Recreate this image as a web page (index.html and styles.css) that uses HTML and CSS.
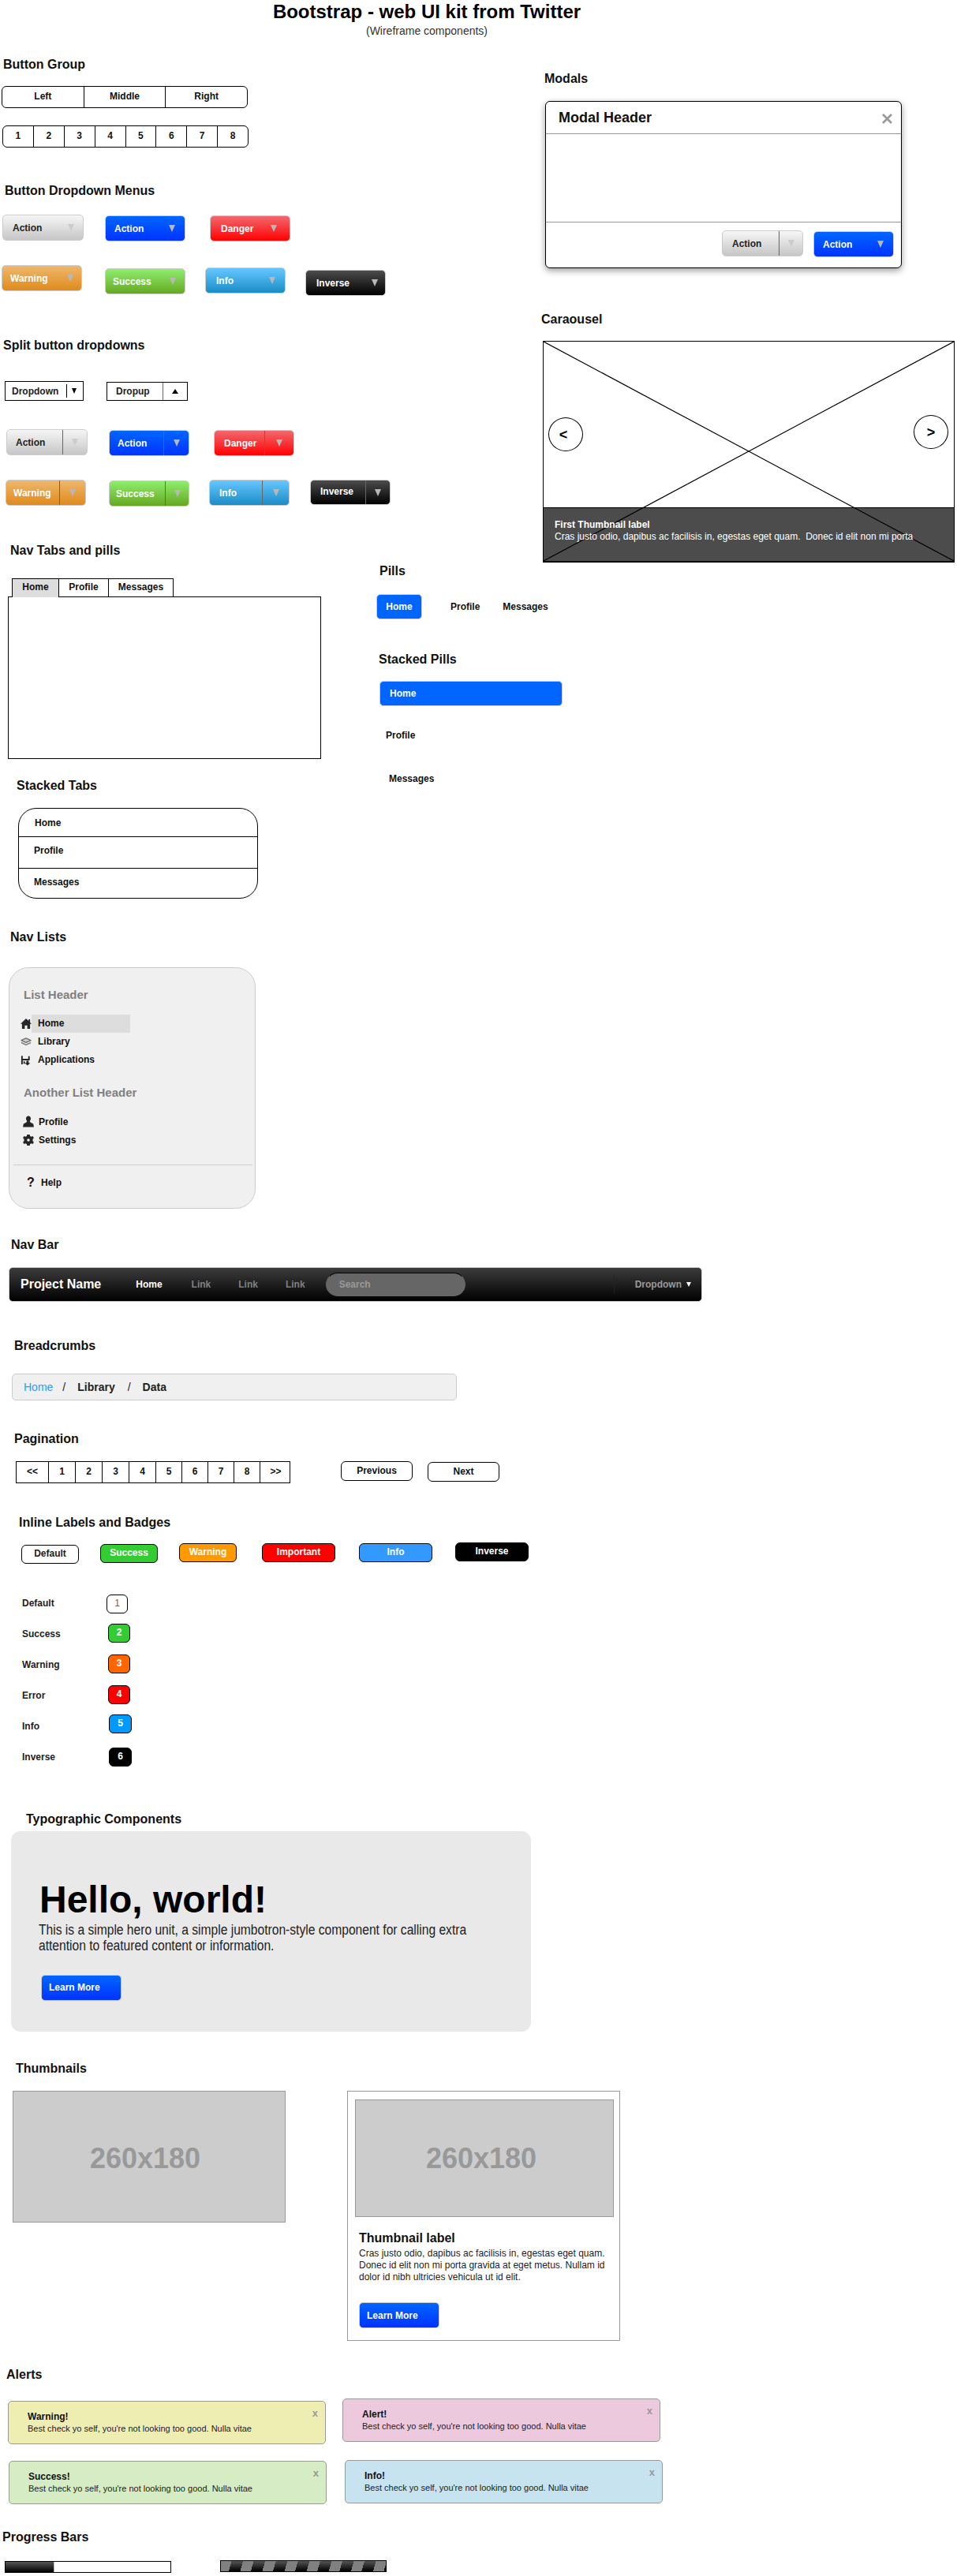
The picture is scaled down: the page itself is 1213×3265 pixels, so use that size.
FILE: index.html
```html
<!DOCTYPE html>
<html lang="en">
<head>
<meta charset="utf-8">
<title>Bootstrap - web UI kit from Twitter</title>
<link rel="stylesheet" href="styles.css">
</head>
<body>
<header class="head">
  <h1 class="head-title">Bootstrap - web UI kit from Twitter</h1>
  <p class="head-sub">(Wireframe components)</p>
</header>

<div class="top">
  <div class="left">
    <h2 class="st st-group">Button Group</h2>
    <div class="bgroup bgroup-a"><span>Left</span><span>Middle</span><span>Right</span></div>
    <div class="bgroup bgroup-b"><span>1</span><span>2</span><span>3</span><span>4</span><span>5</span><span>6</span><span>7</span><span>8</span></div>

    <h2 class="st st-dd">Button Dropdown Menus</h2>
    <div class="row row-dd1">
      <div class="btn gray dd1-gray"><span>Action</span><i class="caret"></i></div>
      <div class="btn blue dd1-blue"><span>Action</span><i class="caret"></i></div>
      <div class="btn red dd1-red"><span>Danger</span><i class="caret"></i></div>
    </div>
    <div class="row row-dd2">
      <div class="btn orange dd2-orange"><span>Warning</span><i class="caret"></i></div>
      <div class="btn green dd2-green"><span>Success</span><i class="caret"></i></div>
      <div class="btn sky dd2-sky"><span>Info</span><i class="caret"></i></div>
      <div class="btn dark dd2-dark"><span>Inverse</span><i class="caret"></i></div>
    </div>

    <h2 class="st st-split">Split button dropdowns</h2>
    <div class="row row-wire">
      <div class="wire wire-down"><span>Dropdown</span><b class="wire-sep"></b><i class="caret caret-black"></i></div>
      <div class="wire wire-up"><span class="wire-main">Dropup</span><i class="caret-up"></i></div>
    </div>
    <div class="row row-sp1">
      <div class="btn split gray sp1-gray"><span class="main">Action</span><span class="side"><i class="caret"></i></span></div>
      <div class="btn split blue sp1-blue"><span class="main">Action</span><span class="side"><i class="caret"></i></span></div>
      <div class="btn split red sp1-red"><span class="main">Danger</span><span class="side"><i class="caret"></i></span></div>
    </div>
    <div class="row row-sp2">
      <div class="btn split orange sp2-orange"><span class="main">Warning</span><span class="side"><i class="caret"></i></span></div>
      <div class="btn split green sp2-green"><span class="main">Success</span><span class="side"><i class="caret"></i></span></div>
      <div class="btn split sky sp2-sky"><span class="main">Info</span><span class="side"><i class="caret"></i></span></div>
      <div class="btn split dark sp2-dark"><span class="main">Inverse</span><span class="side"><i class="caret"></i></span></div>
    </div>

    <div class="nav-row">
      <div class="nav-main">
        <h2 class="st st-tabs">Nav Tabs and pills</h2>
        <div class="tabs"><span class="tab tab-home">Home</span><span class="tab tab-profile">Profile</span><span class="tab tab-msg">Messages</span></div>
        <div class="tab-body"></div>

        <h2 class="st st-stacked">Stacked Tabs</h2>
        <div class="stacked">
          <div class="stacked-a">Home</div>
          <div class="stacked-b">Profile</div>
          <div class="stacked-c">Messages</div>
        </div>
      </div>
      <div class="pills-col">
        <h2 class="st st-pills">Pills</h2>
        <div class="pills"><span class="pill">Home</span><span class="pill-link pl-profile">Profile</span><span class="pill-link pl-msg">Messages</span></div>
        <h2 class="st st-spills">Stacked Pills</h2>
        <div class="spill">Home</div>
        <div class="spill-link spl-profile">Profile</div>
        <div class="spill-link spl-msg">Messages</div>
      </div>
    </div>
  </div>

  <aside class="right">
    <h2 class="st st-modals">Modals</h2>
    <div class="modal">
      <div class="modal-head"><span>Modal Header</span>
        <svg class="modal-x" width="13" height="13" viewBox="0 0 13 13"><path d="M1 1 12 12M12 1 1 12" stroke="#999" stroke-width="2.6" fill="none"/></svg>
      </div>
      <div class="modal-body"></div>
      <div class="modal-foot">
        <div class="btn split gray md-gray"><span class="main">Action</span><span class="side"><i class="caret"></i></span></div>
        <div class="btn blue md-blue"><span>Action</span><i class="caret"></i></div>
      </div>
    </div>
    <h2 class="st st-car">Caraousel</h2>
    <div class="carousel">
      <svg class="car-x" viewBox="0 0 520 279" preserveAspectRatio="none"><path d="M0 0 520 279M0 279 520 0" stroke="#000" stroke-width="1.2" fill="none"/></svg>
      <div class="car-prev">&lt;</div>
      <div class="car-next">&gt;</div>
      <div class="car-cap">
        <div class="car-cap-title">First Thumbnail label</div>
        <div class="car-cap-text">Cras justo odio, dapibus ac facilisis in, egestas eget quam.&nbsp; Donec id elit non mi porta</div>
      </div>
    </div>
  </aside>
</div>

<h2 class="st st-lists">Nav Lists</h2>
<nav class="panel">
  <div class="panel-h panel-h1">List Header</div>
  <ul class="nlist nlist-a">
    <li class="active">
      <svg class="ico" width="15" height="15" viewBox="0 0 15 15"><path d="M7.500 .5 11 3.800V1.500h2v4.200L15 7.800H13V14.500H9.200V9.800H5.800V14.500H2V7.800H0z" fill="#262626"/></svg>
      <span class="nl">Home</span></li>
    <li>
      <svg class="ico" width="15" height="14" viewBox="0 0 15 14"><path d="M7.500 1.500 14 4.500 7.500 7.500 1 4.500z" fill="#ccc" stroke="#707070" stroke-width="1.400" stroke-linejoin="round"/><path d="M.8 6.500 1 8.500 7.500 11.500 14 8.500 14.200 6.500 7.500 9.500z" fill="#8a8a8a"/></svg>
      <span class="nl">Library</span></li>
    <li>
      <svg class="ico" width="15" height="15" viewBox="0 0 15 15"><path d="M1 2h2v4h7.500V2.500H12.500V8H3v5.500H1z" fill="#222"/><path d="M4 9.500h2v3H4zM8 8.500h3v3h2.200L9.500 15 5.800 11.500H8z" fill="#222"/></svg>
      <span class="nl">Applications</span></li>
  </ul>
  <div class="panel-h panel-h2">Another List Header</div>
  <ul class="nlist nlist-b">
    <li>
      <svg class="ico" width="14" height="15" viewBox="0 0 14 15"><path d="M7 .5c2 0 3 1.500 3 3.300 0 1.400-.6 2.500-1.200 3.200l.7 1.500 3.700 2 .8 4H.0l.8-4 3.700-2 .7-1.500C4.600 6.300 4 5.200 4 3.800 4 2 5 .5 7 .5z" fill="#262626"/></svg>
      <span class="nl">Profile</span></li>
    <li>
      <svg class="ico" width="14" height="14" viewBox="0 0 14 14"><path fill-rule="evenodd" d="M5.300 0h3.400l.4 1.900 1.700.9 1.800-.8 1.300 2.400-1.400 1.300v2.600l1.400 1.300-1.300 2.400-1.800-.8-1.700.9-.4 1.900H5.300l-.4-1.900-1.700-.9-1.800.8L.1 9.600l1.400-1.300V5.700L.1 4.400 1.400 2l1.800.8 1.700-.9zM7 5.200a1.800 1.800 0 1 0 0 3.600 1.800 1.800 0 0 0 0-3.600z" fill="#262626"/></svg>
      <span class="nl">Settings</span></li>
  </ul>
  <hr class="panel-rule">
  <div class="help"><span class="help-q">?</span><span>Help</span></div>
</nav>

<h2 class="st st-navbar">Nav Bar</h2>
<div class="navbar">
  <span class="brand">Project Name</span>
  <span class="nb-home">Home</span>
  <span class="nb-link nb-l1">Link</span>
  <span class="nb-link nb-l2">Link</span>
  <span class="nb-link nb-l2">Link</span>
  <div class="nb-search">Search</div>
  <div class="nb-right"><span class="nb-drop">Dropdown</span><i class="caret-mini"></i></div>
</div>

<h2 class="st st-crumbs">Breadcrumbs</h2>
<div class="crumbs">
  <a class="cr-home">Home</a><span class="cr-sep cr-sep1">/</span><span class="cr-lib">Library</span><span class="cr-sep cr-sep2">/</span><span class="cr-data">Data</span>
</div>

<h2 class="st st-pag">Pagination</h2>
<div class="row row-pag">
  <div class="pager"><span>&lt;&lt;</span><span>1</span><span>2</span><span>3</span><span>4</span><span>5</span><span>6</span><span>7</span><span>8</span><span>&gt;&gt;</span></div>
  <span class="pg-btn pg-prev">Previous</span>
  <span class="pg-btn pg-next">Next</span>
</div>

<h2 class="st st-labels">Inline Labels and Badges</h2>
<div class="row row-labels">
  <span class="lab lab-default">Default</span>
  <span class="lab lab-success">Success</span>
  <span class="lab lab-warning">Warning</span>
  <span class="lab lab-important">Important</span>
  <span class="lab lab-info">Info</span>
  <span class="lab lab-inverse">Inverse</span>
</div>
<div class="badges">
  <div class="bd-row"><span class="bd-name">Default</span><span class="bd bd1">1</span></div>
  <div class="bd-row"><span class="bd-name">Success</span><span class="bd bd2">2</span></div>
  <div class="bd-row"><span class="bd-name">Warning</span><span class="bd bd3">3</span></div>
  <div class="bd-row"><span class="bd-name">Error</span><span class="bd bd4">4</span></div>
  <div class="bd-row"><span class="bd-name">Info</span><span class="bd bd5">5</span></div>
  <div class="bd-row"><span class="bd-name">Inverse</span><span class="bd bd6">6</span></div>
</div>

<h2 class="st st-typo">Typographic Components</h2>
<section class="hero">
  <h1 class="hero-title">Hello, world!</h1>
  <p class="hero-text">This is a simple hero unit, a simple jumbotron-style component for calling extra attention to featured content or information.</p>
  <div class="btn blue learn learn-hero">Learn More</div>
</section>

<h2 class="st st-thumbs">Thumbnails</h2>
<div class="row row-thumbs">
  <div class="ph ph-a">260x180</div>
  <div class="thumb">
    <div class="ph ph-b">260x180</div>
    <h3 class="thumb-label">Thumbnail label</h3>
    <p class="thumb-text">Cras justo odio, dapibus ac facilisis in, egestas eget quam. Donec id elit non mi porta gravida at eget metus. Nullam id dolor id nibh ultricies vehicula ut id elit.</p>
    <div class="btn blue learn learn-thumb">Learn More</div>
  </div>
</div>

<h2 class="st st-alerts">Alerts</h2>
<div class="row row-al1">
  <div class="alert al-warn"><div><div class="al-h">Warning!</div><div class="al-t">Best check yo self, you're not looking too good. Nulla vitae</div></div><span class="al-x">x</span></div>
  <div class="alert al-pink"><div><div class="al-h">Alert!</div><div class="al-t">Best check yo self, you're not looking too good. Nulla vitae</div></div><span class="al-x">x</span></div>
</div>
<div class="row row-al2">
  <div class="alert al-ok"><div><div class="al-h">Success!</div><div class="al-t">Best check yo self, you're not looking too good. Nulla vitae</div></div><span class="al-x">x</span></div>
  <div class="alert al-info"><div><div class="al-h">Info!</div><div class="al-t">Best check yo self, you're not looking too good. Nulla vitae</div></div><span class="al-x">x</span></div>
</div>

<h2 class="st st-progress">Progress Bars</h2>
<div class="row row-prog">
  <div class="bar bar-a"><div class="bar-fill"></div></div>
  <div class="bar bar-b"></div>
</div>
</body>
</html>
```
FILE: styles.css
```css
* { box-sizing: border-box; }
html, body { margin: 0; padding: 0; }
body { width: 1213px; height: 3265px; overflow: hidden; background: #fff; color: #111; font: bold 12px/16px "Liberation Sans", Arial, sans-serif; }
h1, h2, h3, p, ul { margin: 0; padding: 0; }
ul { list-style: none; }
.row { display: flex; align-items: flex-start; }

/* header */
.head { width: 1082px; padding-top: 1px; text-align: center; }
.head-title { font: bold 24px/28px "Liberation Sans", sans-serif; color: #000; }
.head-sub { margin-top: 2px; font: 14px/16px "Liberation Sans", sans-serif; color: #333; }

.top { display: flex; align-items: flex-start; }
.left { flex: 0 0 685px; width: 685px; }
.right { flex: 0 0 528px; }

/* section titles */
.st { font: bold 16px/20px "Liberation Sans", sans-serif; color: #111; height: 20px; }
.st-group { margin: 25px 0 0 4px; }
.st-dd { margin: 45px 0 0 6px; }
.st-split { margin: 53px 0 0 4px; }
.st-tabs { margin: 46px 0 0 13px; }
.st-stacked { margin: 24px 0 0 21px; }
.st-pills { margin: 72px 0 0 4px; }
.st-spills { margin: 41px 0 0 3px; }
.st-modals { margin: 43px 0 0 5px; }
.st-car { margin: 55px 0 0 1px; }
.st-lists { margin: 39px 0 0 13px; }
.st-navbar { margin: 36px 0 0 14px; }
.st-crumbs { margin: 46px 0 0 18px; }
.st-pag { margin: 39px 0 0 18px; }
.st-labels { margin: 40px 0 0 24px; }
.st-typo { margin: 49px 0 0 33px; }
.st-thumbs { margin: 37px 0 0 20px; }
.st-alerts { margin: 33px 0 0 8px; }
.st-progress { margin: 32px 0 0 3px; }

/* button groups */
.bgroup { display: flex; width: 312px; height: 28px; border: 1px solid #000; border-radius: 6px; }
.bgroup span { flex: 1; display: flex; align-items: center; justify-content: center; padding-bottom: 3px; }
.bgroup span + span { border-left: 1px solid #000; }
.bgroup-a { margin: 17px 0 0 2px; }
.bgroup-b { margin: 22px 0 0 3px; }

/* gradient buttons */
.btn { display: flex; align-items: center; justify-content: space-between; width: 102px; height: 33px; border: 1px solid #ccc; border-radius: 5px; flex: none; }
.gray { background: linear-gradient(#f6f6f6, #c6c6c6); color: #222; }
.blue { background: linear-gradient(#0066ff, #0033ff); color: #fff; }
.red { background: linear-gradient(#f2696f, #ff0000); color: #fff; }
.orange { background: linear-gradient(#eeb86c, #e08a1c); color: #fff; }
.green { background: linear-gradient(#8eee6e, #66a820); color: #fff; }
.sky { background: linear-gradient(#66c7ff, #1a8cc6); color: #fff; }
.dark { background: linear-gradient(#4c4c4c, #000); color: #fff; }
.gray .caret { border-top-color: #ccc; }
.caret { display: block; width: 0; height: 0; border-left: 4px solid transparent; border-right: 4px solid transparent; border-top: 9px solid #b8b8b8; flex: none; }

.row-dd1 { margin-top: 20px; }
.row-dd2 { margin-top: 30px; }
.dd1-gray { width: 103px; margin-left: 3px; padding: 0 11px 0 12px; }
.dd1-blue { margin: 1px 0 0 27px; padding: 0 12px 0 11px; }
.dd1-red { margin: 1px 0 0 31px; padding: 0 16px 0 13px; }
.dd2-orange { margin-left: 2px; padding: 0 10px 0 10px; }
.dd2-green { margin: 4px 0 0 29px; padding: 0 11px 0 9px; }
.dd2-sky { margin: 3px 0 0 25px; padding: 0 12px 0 13px; }
.dd2-dark { margin: 6px 0 0 25px; padding: 0 9px 0 13px; }

/* wireframe split */
.row-wire { margin-top: 35px; }
.wire { display: flex; align-items: center; border: 1px solid #000; flex: none; font-size: 12px; color: #222; }
.wire-down { width: 100px; height: 25px; margin-left: 6px; padding-left: 8px; }
.wire-sep { width: 1px; height: 17px; margin-left: 10px; background: #000; }
.caret-black { margin-left: 6px; border-left-width: 3.5px; border-right-width: 3.5px; border-top: 7px solid #000; }
.wire-up { width: 103px; height: 24px; margin: 1px 0 0 29px; }
.wire-main { width: 71px; height: 100%; padding-left: 11px; line-height: 22px; border-right: 1px solid #666; }
.caret-up { display: block; width: 0; height: 0; margin-left: 11px; border-left: 4px solid transparent; border-right: 4px solid transparent; border-bottom: 6px solid #000; }

.split { justify-content: flex-start; }
.split .main { display: flex; align-items: center; height: 100%; border-right: 1px solid #666; flex: none; }
.split .side { flex: 1; display: flex; justify-content: center; align-items: center; }
.row-sp1 { margin-top: 36px; }
.row-sp2 { margin-top: 30px; }
.sp1-gray { width: 103px; margin-left: 8px; }
.sp1-gray .main { width: 71px; padding-left: 11px; }
.sp1-blue { margin: 1px 0 0 27px; }
.sp1-blue .main { width: 69px; padding-left: 10px; }
.sp1-red { margin: 1px 0 0 31px; }
.sp1-red .main { width: 64px; padding-left: 12px; }
.sp2-orange { margin-left: 7px; }
.sp2-orange .main { width: 68px; padding-left: 9px; }
.sp2-green { margin: 1px 0 0 29px; }
.sp2-green .main { width: 71px; padding-left: 8px; }
.sp2-sky { margin-left: 25px; }
.sp2-sky .main { width: 67px; padding-left: 12px; }
.sp2-dark { margin-left: 26px; height: 32px; }
.sp2-dark .main { width: 70px; padding: 0 0 3px 12px; }

/* nav row */
.nav-row { display: flex; align-items: flex-start; }
.nav-main { flex: 0 0 477px; }
.pills-col { flex: none; width: 240px; }
.tabs { display: flex; height: 24px; margin: 25px 0 0 15px; }
.tab { display: flex; align-items: center; justify-content: center; border: 1px solid #000; border-bottom: 0; padding-bottom: 3px; }
.tab + .tab { border-left: 0; }
.tab-home { width: 60px; background: #ddd; }
.tab-profile { width: 63px; }
.tab-msg { width: 82px; }
.tab-body { width: 397px; height: 206px; margin: -1px 0 0 10px; border: 1px solid #000; }
.stacked { width: 304px; height: 115px; margin: 18px 0 0 23px; border: 1px solid #000; border-radius: 23px; }
.stacked div { display: flex; align-items: center; }
.stacked-a { height: 35px; padding-left: 20px; }
.stacked-b { height: 40px; padding: 0 0 6px 19px; border-top: 1px solid #000; }
.stacked-c { height: 38px; padding: 0 0 3px 19px; border-top: 1px solid #000; }

.pills { display: flex; align-items: center; height: 32px; margin-top: 19px; }
.pill { display: flex; align-items: center; justify-content: center; width: 58px; height: 32px; background: #0066ff; border: 1px solid #ccc; border-radius: 5px; color: #fff; }
.pl-profile { margin-left: 36px; }
.pl-msg { margin-left: 29px; }
.spill { display: flex; align-items: center; width: 232px; height: 32px; margin: 17px 0 0 4px; padding-left: 12px; background: #0066ff; border: 1px solid #ccc; border-radius: 5px; color: #fff; }
.spl-profile { margin: 29px 0 0 12px; }
.spl-msg { margin: 39px 0 0 16px; }

/* modal */
.modal { width: 452px; height: 212px; margin: 18px 0 0 6px; border: 1px solid #000; border-radius: 6px; box-shadow: 0 3px 8px rgba(0, 0, 0, .4); background: #fff; }
.modal-head { display: flex; align-items: center; justify-content: space-between; height: 41px; padding: 0 11px 0 16px; border-bottom: 1px solid #999; font-size: 18px; }
.modal-x { margin-top: 2px; }
.modal-body { height: 112px; border-bottom: 1px solid #999; }
.modal-foot { display: flex; justify-content: flex-end; align-items: flex-start; gap: 13px; padding: 10px 9px 0 0; }
.md-gray { width: 103px; }
.md-gray .main { width: 72px; padding-left: 12px; }
.md-blue { margin-top: 1px; padding: 0 12px 0 11px; }

/* carousel */
.carousel { position: relative; display: flex; flex-direction: column; justify-content: flex-end; width: 522px; height: 281px; margin: 17px 0 0 3px; border: 1px solid #000; border-bottom-width: 2px; }
.car-x { position: absolute; left: 0; top: 0; width: 100%; height: 100%; z-index: 0; }
.car-cap { position: relative; height: 68px; padding: 14px 0 0 14px; background: rgba(0, 0, 0, .7); border-top: 1px solid #000; color: #fff; }
.car-cap-title { line-height: 15px; }
.car-cap-text { font-weight: 400; line-height: 15px; }
.car-prev, .car-next { position: absolute; z-index: 1; display: flex; align-items: center; justify-content: center; width: 44px; height: 43px; border: 1px solid #000; border-radius: 50%; background: #fff; font: bold 18px/20px "Liberation Sans", sans-serif; color: #000; }
.car-prev { left: 6px; top: 96px; padding-right: 6px; }
.car-next { left: 469px; top: 93px; }

/* nav list */
.panel { width: 313px; height: 306px; margin: 28px 0 0 11px; padding-top: 25px; background: #f0f0f0; border: 1px solid #ccc; border-radius: 25px; }
.panel-h { font: bold 15px/18px "Liberation Sans", sans-serif; color: #808080; padding-left: 18px; }
.panel-h2 { margin-top: 21px; }
.nlist li { display: flex; align-items: center; height: 23px; }
.nlist-a { margin-top: 16px; padding-left: 14px; }
.nlist-b { margin-top: 16px; padding-left: 17px; }
.nlist-a .ico { flex: 0 0 14px; width: 14px; }
.nlist-a .nl { padding-left: 8px; width: 125px; line-height: 23px; }
.nlist-a .active .nl { background: #ddd; }
.nlist-b .nl { padding-left: 6px; }
.ico { flex: none; overflow: visible; }
.panel-rule { margin: 20px 0 0 5px; width: 303px; height: 1px; border: 0; background: #ccc; }
.help { display: flex; align-items: center; height: 23px; margin-top: 10px; padding-left: 22px; }
.help-q { width: 18px; font-size: 16px; color: #111; }

/* navbar */
.navbar { display: flex; align-items: center; width: 879px; height: 44px; margin: 18px 0 0 11px; padding-left: 14px; background: linear-gradient(#3c3c3c, #000); border: 1px solid #ccc; border-radius: 5px; color: #808080; }
.brand { font-size: 16px; color: #fff; }
.nb-home { margin-left: 44px; color: #fff; }
.nb-l1 { margin-left: 37px; }
.nb-l2 { margin-left: 35px; }
.nb-search { width: 177px; height: 30px; margin-left: 26px; padding-left: 16px; line-height: 28px; background: #666; border: 1px solid #666; border-top-color: #000; border-radius: 15px; color: #999; }
.nb-right { display: flex; align-items: center; height: 24px; margin-left: auto; margin-right: 13px; padding-left: 26px; border-left: 1px solid #222; color: #999; }
.caret-mini { display: block; width: 0; height: 0; margin-left: 6px; border-left: 3px solid transparent; border-right: 3px solid transparent; border-top: 6px solid #fff; }

/* breadcrumbs */
.crumbs { display: flex; align-items: center; width: 564px; height: 34px; margin: 25px 0 0 15px; padding-left: 14px; background: #f0f0f0; border: 1px solid #ccc; border-radius: 5px; font-size: 14px; color: #222; }
.cr-home { font-weight: 400; color: #3399ff; }
.cr-sep { font-weight: 400; }
.cr-sep1 { margin-left: 12px; }
.cr-lib { margin-left: 15px; }
.cr-sep2 { margin-left: 16px; }
.cr-data { margin-left: 15px; }

/* pagination */
.row-pag { margin: 18px 0 0 20px; }
.pager { display: grid; grid-template-columns: 40px repeat(4, 34px) repeat(4, 33px) 40px; width: 348px; height: 28px; border: 1px solid #000; }
.pager span { display: flex; align-items: center; justify-content: center; padding-bottom: 3px; }
.pager span + span { border-left: 1px solid #000; }
.pg-btn { display: flex; align-items: center; justify-content: center; width: 91px; height: 25px; border: 1px solid #000; border-radius: 6px; padding-bottom: 2px; }
.pg-prev { margin-left: 64px; }
.pg-next { margin: 1px 0 0 19px; }

/* labels */
.row-labels { margin-top: 15px; }
.lab { display: flex; align-items: center; justify-content: center; width: 93px; height: 24px; border: 1px solid #000; border-radius: 6px; padding-bottom: 2px; color: #fff; }
.lab-default { width: 73px; margin: 3px 0 0 27px; background: #fff; color: #222; }
.lab-success { width: 73px; margin: 2px 0 0 27px; background: #33cc33; }
.lab-warning { width: 73px; margin: 1px 0 0 27px; background: #ff9900; }
.lab-important { margin: 1px 0 0 32px; background: #ff0000; }
.lab-info { margin: 1px 0 0 30px; background: #3399ff; }
.lab-inverse { margin: 0 0 0 29px; background: #000; }

.badges { margin: 31px 0 0 28px; }
.bd-row { display: flex; align-items: flex-start; height: 39px; }
.bd-name { width: 107px; line-height: 39px; color: #222; }
.bd { display: flex; align-items: center; justify-content: center; width: 28px; height: 24px; padding-bottom: 3px; border: 1px solid #000; border-radius: 6px; color: #fff; }
.bd1 { width: 27px; margin-top: 8px; background: #fff; color: #666; font-weight: 400; }
.bd2 { margin: 6px 0 0 2px; background: #33cc33; }
.bd3 { margin: 6px 0 0 2px; background: #ff6600; }
.bd4 { margin: 6px 0 0 2px; background: #ff0000; }
.bd5 { width: 29px; margin: 4px 0 0 3px; background: #0099ff; }
.bd6 { width: 29px; margin: 7px 0 0 3px; background: #000; }

/* hero */
.hero { width: 659px; height: 254px; margin: 5px 0 0 14px; padding: 61px 0 0 36px; background: #e9e9e9; border-radius: 12px; }
.hero-title { font: bold 48px/52px "Liberation Sans", sans-serif; color: #000; }
.hero-text { width: 640px; margin: 2px 0 0 -1px; font: 18px/20px "Liberation Sans", sans-serif; color: #222; transform: scaleX(.867); transform-origin: left top; }
.learn { justify-content: flex-start; padding-left: 9px; }
.learn-hero { margin: 27px 0 0 2px; padding-bottom: 2px; }

/* thumbnails */
.row-thumbs { margin-top: 18px; }
.ph { display: flex; align-items: center; justify-content: center; background: #ccc; border: 1px solid #999; font: bold 36px/40px "Liberation Sans", sans-serif; color: #999; }
.ph-a { width: 346px; height: 167px; margin-left: 16px; padding: 4px 10px 0 0; }
.ph-b { width: 328px; height: 149px; padding: 1px 8px 0 0; }
.thumb { width: 346px; height: 317px; margin-left: 78px; padding: 10px 0 0 9px; border: 1px solid #999; }
.thumb-label { margin: 17px 0 0 5px; font: bold 16px/20px "Liberation Sans", sans-serif; color: #111; }
.thumb-text { width: 325px; margin: 2px 0 0 5px; font: 12px/15px "Liberation Sans", sans-serif; color: #222; }
.learn-thumb { margin: 24px 0 0 5px; }

/* alerts */
.row-al1 { margin-top: 20px; }
.row-al2 { margin-top: 20px; }
.alert { display: flex; justify-content: space-between; width: 403px; height: 55px; padding: 11px 9px 0 24px; border: 1px solid #999; border-radius: 5px; flex: none; color: #222; }
.al-warn { margin: 3px 0 0 10px; background: #eeeeb3; }
.al-pink { margin-left: 21px; background: #ecc9dd; }
.al-ok { margin: 1px 0 0 11px; background: #d5ecc4; }
.al-info { margin-left: 23px; background: #c7e3ef; }
.al-h { line-height: 16px; color: #111; }
.al-t { font-size: 11px; font-weight: 400; line-height: 14px; }
.al-x { margin-top: -3px; font: bold 13px/14px "Liberation Sans", sans-serif; color: #999; }

/* progress */
.row-prog { margin-top: 19px; }
.bar { width: 211px; height: 15px; border: 1px solid #000; flex: none; background: #fff; }
.bar-a { margin: 1px 0 0 6px; }
.bar-b { margin-left: 62px; background: repeating-linear-gradient(106deg, #808080 0, #808080 13px, transparent 13px, transparent 27px), linear-gradient(#555, #000); }
.bar-fill { width: 62px; height: 100%; background: linear-gradient(#555, #000); border-right: 1px solid #bbb; }
```
